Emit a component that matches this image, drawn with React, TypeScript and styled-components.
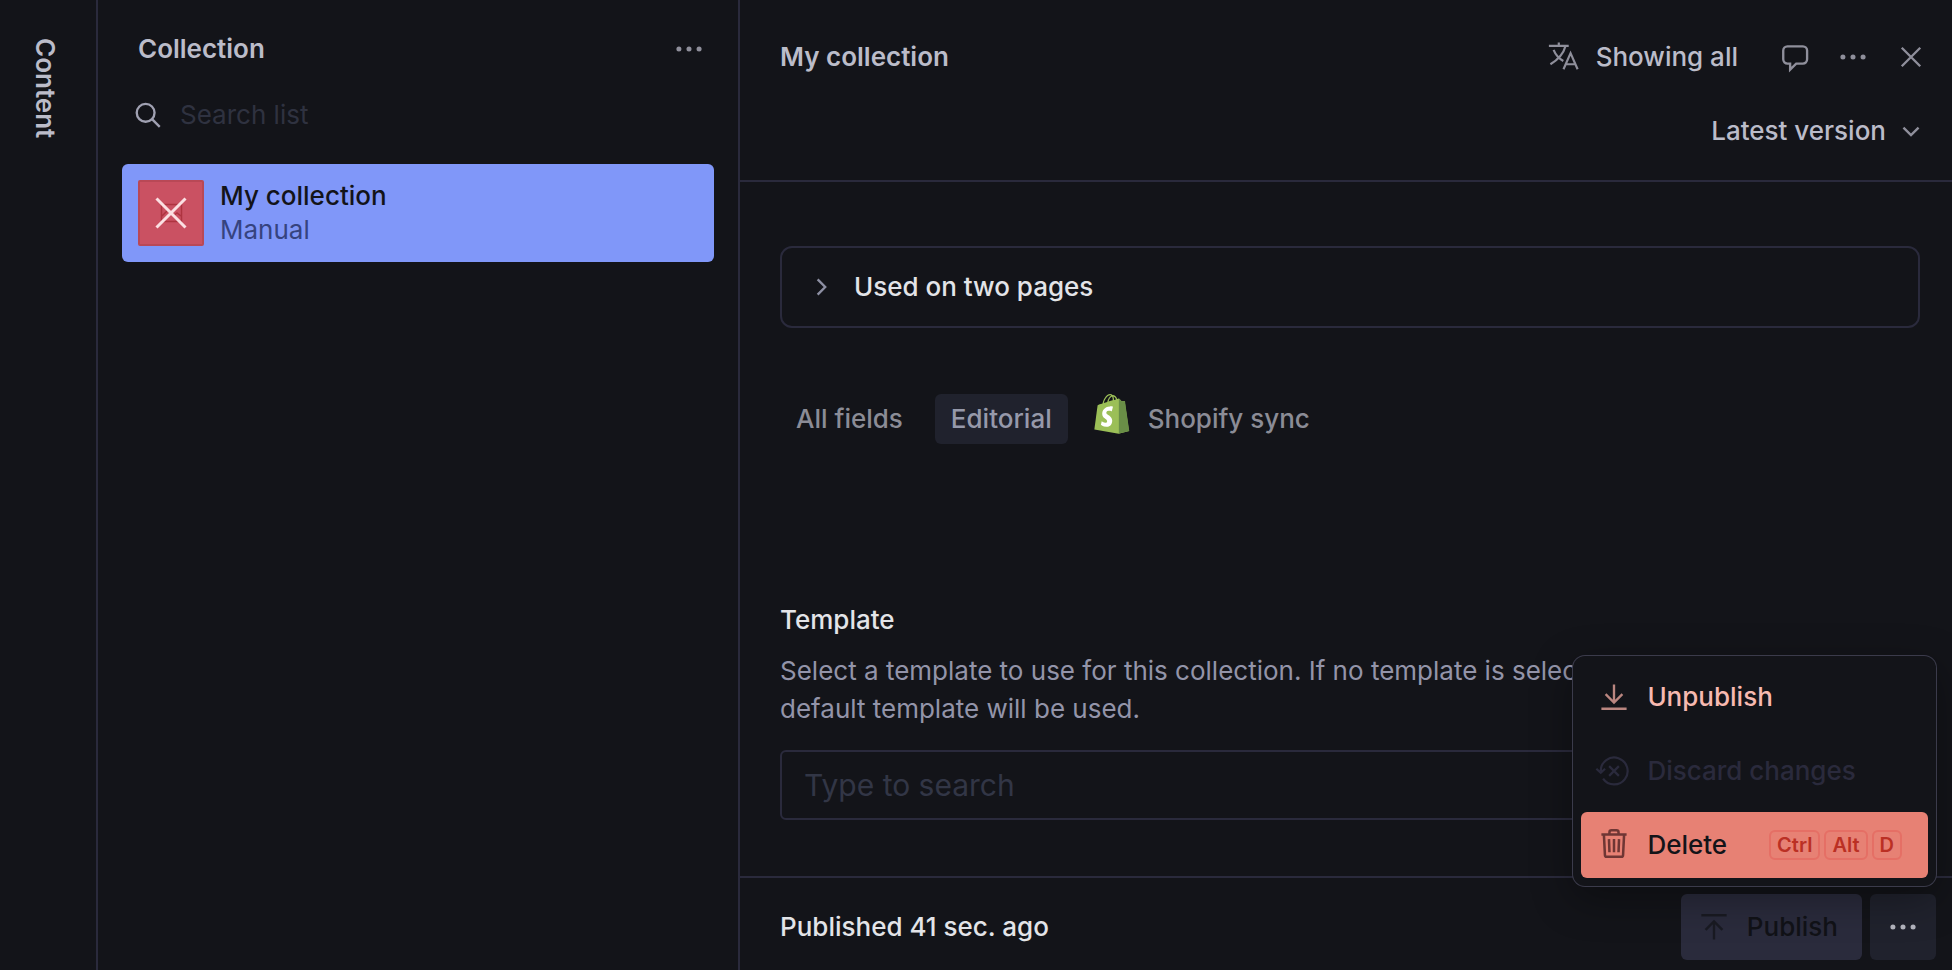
import React from "react";
import styled, { createGlobalStyle, css } from "styled-components";

const color = {
  bg: "#131419",
  border: "#2a2a3c",
  muted: "#8f8f9b",
  heading: "#bbbcc9",
  text: "#e3e4e8",
};

const GlobalStyle = createGlobalStyle`
  *, *::before, *::after { box-sizing: border-box; }
  html { background: ${color.bg}; }
  body {
    margin: 0;
    background: ${color.bg};
    color: ${color.text};
    font-family: Inter, "Liberation Sans", sans-serif;
    font-size: 26px;
    line-height: 32px;
  }
  button, input { font: inherit; color: inherit; }
  h1, h2, p, ul { margin: 0; padding: 0; }
`;

const Studio = styled.div`
  display: flex;
  height: 100vh;
  min-height: 900px;
`;

const Rail = styled.nav`
  flex: 0 0 98px;
  padding: 38px 0 0 29px;
  border-right: 2px solid ${color.border};
`;

const RailLabel = styled.span`
  writing-mode: vertical-rl;
  font-weight: 600;
  color: ${color.heading};
`;

const ListPane = styled.section`
  flex: 0 0 642px;
  padding: 24px;
  border-right: 2px solid ${color.border};
`;

const Heading = styled.h1`
  flex: 1;
  font-size: 26px;
  font-weight: 600;
  color: ${color.heading};
`;

const ListHeader = styled.header`
  display: flex;
  align-items: center;
  height: 50px;
  padding-left: 16px;
`;

const IconButton = styled.button`
  display: flex;
  align-items: center;
  justify-content: center;
  width: 50px;
  height: 50px;
  padding: 0;
  border: 0;
  border-radius: 6px;
  background: transparent;
  color: ${color.muted};
`;

const SearchField = styled.label`
  display: flex;
  align-items: center;
  gap: 10px;
  height: 50px;
  margin: 16px 0 24px;
  padding-left: 6px;
  color: #a0a1b2;
`;

const SearchInput = styled.input`
  flex: 1;
  min-width: 0;
  padding: 0;
  border: 0;
  outline: 0;
  background: transparent;
  &::placeholder { color: #2f3240; opacity: 1; }
`;

const ListItem = styled.a`
  display: flex;
  align-items: center;
  gap: 16px;
  height: 98px;
  padding: 0 16px;
  border-radius: 6px;
  background: #8097f9;
  color: #131419;
  text-decoration: none;
`;

const Thumb = styled.span`
  display: flex;
  width: 66px;
  height: 66px;
  border: 2px solid #b94856;
  border-radius: 2px;
  background: #ca5162;
`;

const ItemText = styled.span`
  display: flex;
  flex-direction: column;
  line-height: 34px;
`;

const ItemTitle = styled.span`
  font-weight: 500;
`;

const ItemSubtitle = styled.span`
  color: #36437f;
`;

const DocumentPane = styled.main`
  display: flex;
  flex: 1;
  flex-direction: column;
  min-width: 0;
`;

const DocumentHeader = styled.header`
  padding: 32px 16px 24px 40px;
  border-bottom: 2px solid ${color.border};
`;

const HeaderRow = styled.div`
  display: flex;
  align-items: center;
  gap: 8px;
  height: 50px;
  & + & { justify-content: flex-end; margin-top: 24px; }
`;

const TextButton = styled.button`
  display: flex;
  align-items: center;
  gap: 12px;
  height: 50px;
  padding: 0;
  border: 0;
  background: transparent;
  color: ${color.heading};
  font-weight: 500;
  svg { color: ${color.muted}; }
`;

const LanguageButton = styled(TextButton)`
  padding-right: 24px;
`;

const VersionButton = styled(TextButton)`
  gap: 4px;
  padding-right: 4px;
`;

const Content = styled.div`
  flex: 1;
  min-height: 0;
  padding: 64px 32px 48px 40px;
  overflow: hidden;
`;

const Disclosure = styled.button`
  display: flex;
  align-items: center;
  gap: 12px;
  width: 100%;
  height: 82px;
  padding: 0 18px;
  border: 2px solid ${color.border};
  border-radius: 12px;
  background: transparent;
  color: ${color.text};
  font-weight: 500;
  text-align: left;
  svg { color: #8d8fa3; }
`;

const Tabs = styled.div`
  display: flex;
  gap: 16px;
  margin: 66px 0 160px;
`;

const Tab = styled.button<{ $selected?: boolean; $withLogo?: boolean }>`
  display: flex;
  align-items: center;
  gap: 18px;
  height: 50px;
  padding: 0 16px;
  border: 0;
  border-radius: 6px;
  background: ${(p) => (p.$selected ? "#20222d" : "transparent")};
  color: ${(p) => (p.$selected ? "#9699aa" : "#8b8c96")};
  font-weight: 500;
  ${(p) =>
    p.$withLogo &&
    css`
      padding-left: 10px;
      svg { align-self: flex-start; }
    `}
`;

const FieldLabel = styled.label`
  display: block;
  font-weight: 500;
`;

const FieldHelp = styled.p`
  max-width: 920px;
  margin: 16px 0 22px;
  line-height: 38px;
  color: #9394a9;
`;

const TextInput = styled.input`
  display: block;
  width: 100%;
  height: 70px;
  padding: 0 22px;
  border: 2px solid ${color.border};
  border-radius: 6px;
  outline: 0;
  background: transparent;
  font-size: 30px;
  &::placeholder { color: #323646; opacity: 1; }
`;

const Footer = styled.footer`
  display: flex;
  align-items: center;
  gap: 8px;
  padding: 16px 16px 10px 40px;
  border-top: 2px solid ${color.border};
`;

const Status = styled.span`
  flex: 1;
  font-weight: 500;
`;

const PublishButton = styled.button`
  display: flex;
  align-items: center;
  gap: 12px;
  height: 66px;
  padding: 0 24px 0 12px;
  border: 0;
  border-radius: 6px;
  background: #2a2b3c;
  color: #111217;
  font-weight: 500;
  svg { color: #191a22; }
`;

const MenuAnchor = styled.div`
  position: relative;
`;

const MoreButton = styled(IconButton)`
  width: 66px;
  height: 66px;
  background: #20222d;
  color: #b4b5bf;
`;

const Menu = styled.div`
  position: absolute;
  right: 0;
  bottom: calc(100% + 8px);
  display: flex;
  flex-direction: column;
  gap: 8px;
  padding: 8px;
  border-radius: 12px;
  background: ${color.bg};
  box-shadow: 0 0 0 1px #3b3b4b, 0 12px 40px rgba(0, 0, 0, 0.35);
`;

type Tone = "caution" | "disabled" | "active";

const tones: Record<Tone, ReturnType<typeof css>> = {
  caution: css`
    color: #f7b9b0;
    svg { color: #ba8680; }
  `,
  disabled: css`
    color: #2a2a3c;
  `,
  active: css`
    background: #e78174;
    color: #131419;
    svg { color: #6f3634; }
  `,
};

const MenuItem = styled.button<{ $tone: Tone }>`
  display: flex;
  align-items: center;
  gap: 12px;
  height: 66px;
  padding: 0 26px 0 12px;
  border: 0;
  border-radius: 6px;
  background: transparent;
  font-weight: 500;
  white-space: nowrap;
  ${(p) => tones[p.$tone]}
`;

const Keys = styled.span`
  display: flex;
  gap: 4px;
  margin-left: 30px;
`;

const Key = styled.kbd`
  padding: 0 6px;
  border: 2px solid #e56f65;
  border-radius: 6px;
  color: #bb3024;
  font-family: inherit;
  font-size: 20px;
  font-weight: 600;
  line-height: 26px;
`;

const Icon = ({ children, weight = 1.4 }: { children: React.ReactNode; weight?: number }) => (
  <svg
    width={42}
    height={42}
    viewBox="0 0 25 25"
    fill="none"
    stroke="currentColor"
    strokeWidth={weight}
    aria-hidden="true"
  >
    {children}
  </svg>
);

const DotsIcon = () => (
  <Icon>
    <g fill="currentColor" stroke="none">
      <circle cx="6.5" cy="12.5" r="1.5" />
      <circle cx="12.5" cy="12.5" r="1.5" />
      <circle cx="18.5" cy="12.5" r="1.5" />
    </g>
  </Icon>
);

const SearchIcon = () => (
  <Icon>
    <circle cx="10.500" cy="11.200" r="5.300" />
    <path d="M14.300 15L18.900 19.600" />
  </Icon>
);

const TranslateIcon = () => (
  <Icon weight={1.3}>
    <path d="M4.100 5.900H15.900M10 3.900V5.900M14 5.900C13 9.800 9.900 13.800 5 16.800M6.900 8.300C8 11 9.900 13.400 12.700 14.900M12.800 19.800L17 10.200L21.200 19.800M14.100 16.800H19.900" />
  </Icon>
);

const CommentIcon = () => (
  <Icon>
    <path d="M9.600 16.400H8C6.600 16.400 5.500 15.300 5.500 13.900V8.700C5.500 7.300 6.600 6.200 8 6.200H17.200C18.600 6.200 19.700 7.300 19.700 8.700V13.900C19.700 15.300 18.600 16.400 17.200 16.400H13.200L9.600 20V16.400Z" />
  </Icon>
);

const CloseIcon = () => (
  <Icon>
    <path d="M18 7L7 18M7 7L18 18" />
  </Icon>
);

const ChevronDownIcon = () => (
  <Icon>
    <path d="M17 10.500L12.500 15L8 10.500" />
  </Icon>
);

const ChevronRightIcon = () => (
  <Icon>
    <path d="M10.500 8L15 12.500L10.500 17" />
  </Icon>
);

const UnpublishIcon = () => (
  <Icon>
    <path d="M5 19.500H20M12.500 5V16M7.500 10.800L12.500 15.800L17.500 10.800" />
  </Icon>
);

const PublishIcon = () => (
  <Icon>
    <path d="M5 5.500H20M12.500 20V9M7.500 14.200L12.500 9.200L17.500 14.200" />
  </Icon>
);

const DiscardIcon = () => (
  <Icon weight={1.3}>
    <path d="M4.600 12.500A8 8 0 1 1 6 17M2 11.200L4.600 13.600L7.200 11.200M9.600 9.600L15.400 15.400M15.400 9.600L9.600 15.400" />
  </Icon>
);

const TrashIcon = () => (
  <Icon weight={1.5}>
    <path d="M5 6.300H20M9.800 6.200V4.900C9.800 4.100 10.300 3.700 11 3.700H14C14.700 3.700 15.200 4.100 15.200 4.900V6.200M6.500 6.500L7.100 18.400C7.100 19.100 7.600 19.500 8.100 19.500H16.900C17.400 19.500 17.900 19.100 17.900 18.400L18.500 6.500M9.500 9L9.800 16.800M12.500 9V16.800M15.500 9L15.200 16.800" />
  </Icon>
);

const BrokenImage = () => (
  <svg width="62" height="62" viewBox="0 0 62 62" fill="none" aria-hidden="true">
    <path
      d="M21.500 22.500H41.500V39.500H21.500ZM22 34L28 28L37 38M33 34L37 31L41 34"
      stroke="#ae3440"
      strokeWidth="1.500"
    />
    <path d="M16.500 16.500L45.500 45.500M45.500 16.500L16.500 45.500" stroke="#fbe0e3" strokeWidth="3" />
  </svg>
);

const ShopifyLogo = () => (
  <svg width="36" height="40" viewBox="0 0 110 125" aria-hidden="true">
    <path
      fill="#9bbf57"
      d="M95.900 23.900c-.1-.6-.6-1-1.100-1-.5 0-9.300-.2-9.300-.2s-7.400-7.200-8.100-7.900c-.7-.7-2.200-.5-2.700-.3 0 0-1.400.4-3.700 1.100-.4-1.300-1-2.800-1.800-4.400-2.600-5-6.500-7.700-11.100-7.700-.3 0-.6 0-1 .1-.1-.2-.3-.3-.4-.5-2-2.200-4.600-3.200-7.700-3.100-6 .2-12 4.500-16.800 12.200-3.400 5.400-6 12.200-6.800 17.500-6.900 2.100-11.700 3.600-11.800 3.700-3.500 1.100-3.600 1.200-4 4.500-.3 2.500-9.500 73.100-9.500 73.100l75.600 13.100 32.800-8.100c0-.1-13.500-91.300-13.600-92.100zM67.200 16.800c-1.800.5-3.800 1.200-5.900 1.800 0-3-.4-7.300-1.800-10.900 4.500.9 6.800 6 7.700 9.100zm-10 3c-4 1.200-8.400 2.600-12.800 3.900 1.200-4.700 3.600-9.400 6.400-12.500 1.100-1.100 2.600-2.400 4.300-3.200 1.800 3.600 2.200 8.500 2.100 11.800zM49.100 4c1.400 0 2.600.3 3.600.9-1.600.9-3.200 2.100-4.700 3.700-3.800 4.100-6.700 10.500-7.900 16.600-3.600 1.100-7.200 2.200-10.500 3.200C31.700 18.800 39.800 4.300 49.100 4z"
    />
    <path
      fill="#698e47"
      d="M94.800 22.900c-.5 0-9.300-.2-9.300-.2s-7.400-7.200-8.100-7.900c-.3-.3-.6-.4-1-.5v109.400l32.800-8.100S95.900 24.600 95.800 23.800c-.1-.6-.5-.9-1-.9z"
    />
    <path
      fill="#fff"
      d="M58 39.900l-3.800 14.400s-4.300-2-9.400-1.600c-7.500.5-7.500 5.200-7.500 6.400.4 6.400 17.300 7.800 18.300 22.900.7 11.900-6.300 20-16.400 20.600-12.200.8-18.900-6.400-18.900-6.400l2.600-11s6.700 5.100 12.100 4.700c3.500-.2 4.800-3.100 4.700-5.100-.5-8.400-14.300-7.900-15.200-21.700-.8-11.600 6.900-23.400 23.700-24.400 6.500-.5 9.800 1.200 9.800 1.200z"
    />
  </svg>
);

export default function App() {
  return (
    <>
      <GlobalStyle />
      <Studio>
        <Rail aria-label="Content">
          <RailLabel>Content</RailLabel>
        </Rail>

        <ListPane>
          <ListHeader>
            <Heading>Collection</Heading>
            <IconButton aria-label="List options">
              <DotsIcon />
            </IconButton>
          </ListHeader>
          <SearchField>
            <SearchIcon />
            <SearchInput type="text" placeholder="Search list" aria-label="Search list" />
          </SearchField>
          <ListItem href="#my-collection">
            <Thumb>
              <BrokenImage />
            </Thumb>
            <ItemText>
              <ItemTitle>My collection</ItemTitle>
              <ItemSubtitle>Manual</ItemSubtitle>
            </ItemText>
          </ListItem>
        </ListPane>

        <DocumentPane>
          <DocumentHeader>
            <HeaderRow>
              <Heading as="h2">My collection</Heading>
              <LanguageButton>
                <TranslateIcon />
                Showing all
              </LanguageButton>
              <IconButton aria-label="Comments">
                <CommentIcon />
              </IconButton>
              <IconButton aria-label="Document options">
                <DotsIcon />
              </IconButton>
              <IconButton aria-label="Close">
                <CloseIcon />
              </IconButton>
            </HeaderRow>
            <HeaderRow>
              <VersionButton>
                Latest version
                <ChevronDownIcon />
              </VersionButton>
            </HeaderRow>
          </DocumentHeader>

          <Content>
            <Disclosure aria-expanded={false}>
              <ChevronRightIcon />
              Used on two pages
            </Disclosure>
            <Tabs role="tablist">
              <Tab role="tab" aria-selected={false}>
                All fields
              </Tab>
              <Tab role="tab" aria-selected $selected>
                Editorial
              </Tab>
              <Tab role="tab" aria-selected={false} $withLogo>
                <ShopifyLogo />
                Shopify sync
              </Tab>
            </Tabs>
            <FieldLabel htmlFor="template">Template</FieldLabel>
            <FieldHelp>
              Select a template to use for this collection. If no template is selected, the default
              template will be used.
            </FieldHelp>
            <TextInput id="template" type="text" placeholder="Type to search" />
          </Content>

          <Footer>
            <Status>Published 41 sec. ago</Status>
            <PublishButton>
              <PublishIcon />
              Publish
            </PublishButton>
            <MenuAnchor>
              <MoreButton aria-label="More actions" aria-haspopup="menu" aria-expanded>
                <DotsIcon />
              </MoreButton>
              <Menu role="menu">
                <MenuItem role="menuitem" $tone="caution">
                  <UnpublishIcon />
                  Unpublish
                </MenuItem>
                <MenuItem role="menuitem" aria-disabled $tone="disabled">
                  <DiscardIcon />
                  Discard changes
                </MenuItem>
                <MenuItem role="menuitem" $tone="active">
                  <TrashIcon />
                  Delete
                  <Keys>
                    <Key>Ctrl</Key>
                    <Key>Alt</Key>
                    <Key>D</Key>
                  </Keys>
                </MenuItem>
              </Menu>
            </MenuAnchor>
          </Footer>
        </DocumentPane>
      </Studio>
    </>
  );
}
